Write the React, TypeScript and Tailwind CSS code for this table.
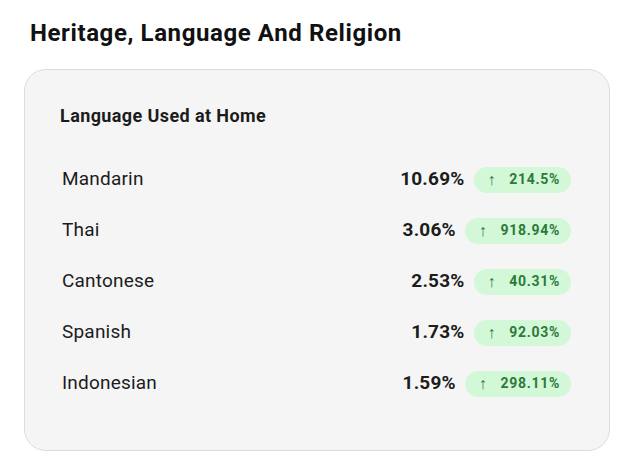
import React from "react";

type Row = { name: string; share: string; change: string };

const rows: Row[] = [
  { name: "Mandarin", share: "10.69%", change: "214.5%" },
  { name: "Thai", share: "3.06%", change: "918.94%" },
  { name: "Cantonese", share: "2.53%", change: "40.31%" },
  { name: "Spanish", share: "1.73%", change: "92.03%" },
  { name: "Indonesian", share: "1.59%", change: "298.11%" },
];

const LanguageRow: React.FC<{ row: Row }> = ({ row }) => (
  <div className="flex items-center justify-between h-[51px]">
    <span className="text-[19px] text-[#1c1c1c] pl-[2px] tracking-[0.2px]">{row.name}</span>
    <div className="flex items-center gap-[9px]">
      <span className="text-[19px] font-bold text-[#1c1c1c] tracking-[0.2px]">{row.share}</span>
      <span className="flex items-center gap-[13px] h-[26px] rounded-full bg-[#d3f8d7] pl-[14px] pr-[11px] text-[14px] font-bold text-[#2c7a3a] tracking-[0.7px]">
        <span className="text-[16px] font-bold">↑</span>
        {row.change}
      </span>
    </div>
  </div>
);

export default function App() {
  return (
    <div
      className="w-[630px] h-[473px] bg-white pt-[18px] pl-[24px]"
      style={{ fontFamily: "Roboto, 'Noto Sans', sans-serif" }}
    >
      <h1 className="text-[24px] font-bold text-[#111] pl-[6px] leading-[30px] tracking-[0.6px]">
        Heritage, Language And Religion
      </h1>
      <div className="mt-[21px] w-[586px] h-[382px] rounded-[22px] border border-[#dcdcdc] bg-[#f5f5f5] pl-[35px] pr-[38px] pt-[32px]">
        <h2 className="text-[18px] font-bold text-[#1c1c1c] leading-[28px] tracking-[0.4px]">
          Language Used at Home
        </h2>
        <div className="mt-[24px]">
          {rows.map((r) => (
            <LanguageRow key={r.name} row={r} />
          ))}
        </div>
      </div>
    </div>
  );
}
